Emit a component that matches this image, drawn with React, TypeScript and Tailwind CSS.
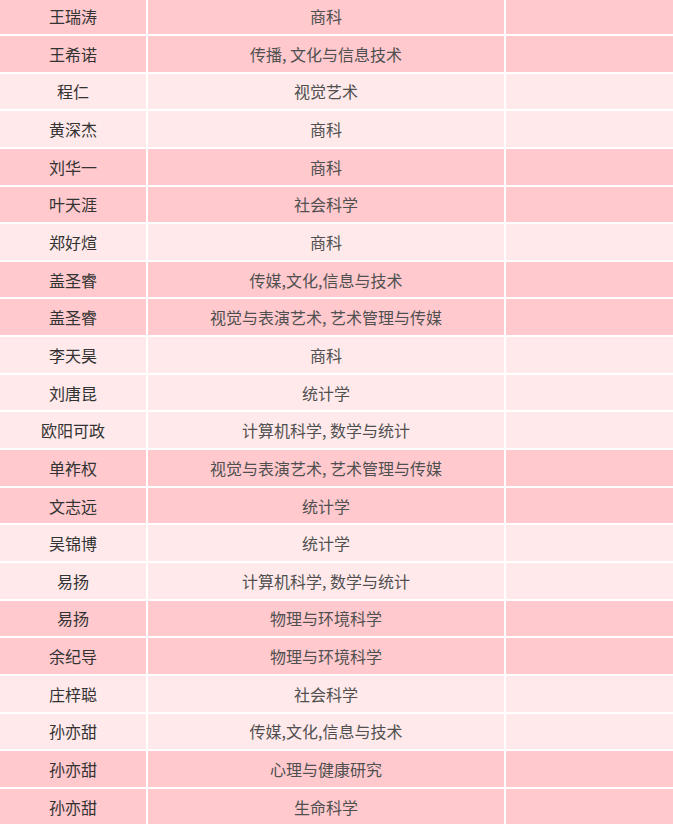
import React from "react";

// name, major, shade (true = darker pink)
type Row = [string, string, boolean];

const rows: Row[] = [
  ["王瑞涛", "商科", true],
  ["王希诺", "传播, 文化与信息技术", true],
  ["程仁", "视觉艺术", false],
  ["黄深杰", "商科", false],
  ["刘华一", "商科", true],
  ["叶天涯", "社会科学", true],
  ["郑好煊", "商科", false],
  ["盖圣睿", "传媒,文化,信息与技术", true],
  ["盖圣睿", "视觉与表演艺术, 艺术管理与传媒", true],
  ["李天昊", "商科", false],
  ["刘唐昆", "统计学", false],
  ["欧阳可政", "计算机科学, 数学与统计", false],
  ["单祚权", "视觉与表演艺术, 艺术管理与传媒", true],
  ["文志远", "统计学", true],
  ["吴锦博", "统计学", false],
  ["易扬", "计算机科学, 数学与统计", false],
  ["易扬", "物理与环境科学", true],
  ["余纪导", "物理与环境科学", true],
  ["庄梓聪", "社会科学", false],
  ["孙亦甜", "传媒,文化,信息与技术", false],
  ["孙亦甜", "心理与健康研究", true],
  ["孙亦甜", "生命科学", true],
];

export default function App() {
  return (
    <div
      className="h-[827px] w-[673px] overflow-hidden bg-white"
      style={{ fontFamily: '"Noto Sans CJK SC", "Noto Sans", sans-serif' }}
    >
      <div className="-mt-[1.65px] flex flex-col gap-[2px]">
        {rows.map(([name, major, dark], i) => {
          const bg = dark ? "bg-[#ffc9cd]" : "bg-[#ffe9ea]";
          return (
            <div key={i} className="flex h-[35.65px] gap-[2px] text-[16px]">
              <div className={`${bg} flex w-[146px] shrink-0 items-center justify-center text-[#333]`}>
                {name}
              </div>
              <div className={`${bg} flex w-[356px] shrink-0 items-center justify-center text-[#505050]`}>
                {major}
              </div>
              <div className={`${bg} flex-1`} />
            </div>
          );
        })}
      </div>
    </div>
  );
}
